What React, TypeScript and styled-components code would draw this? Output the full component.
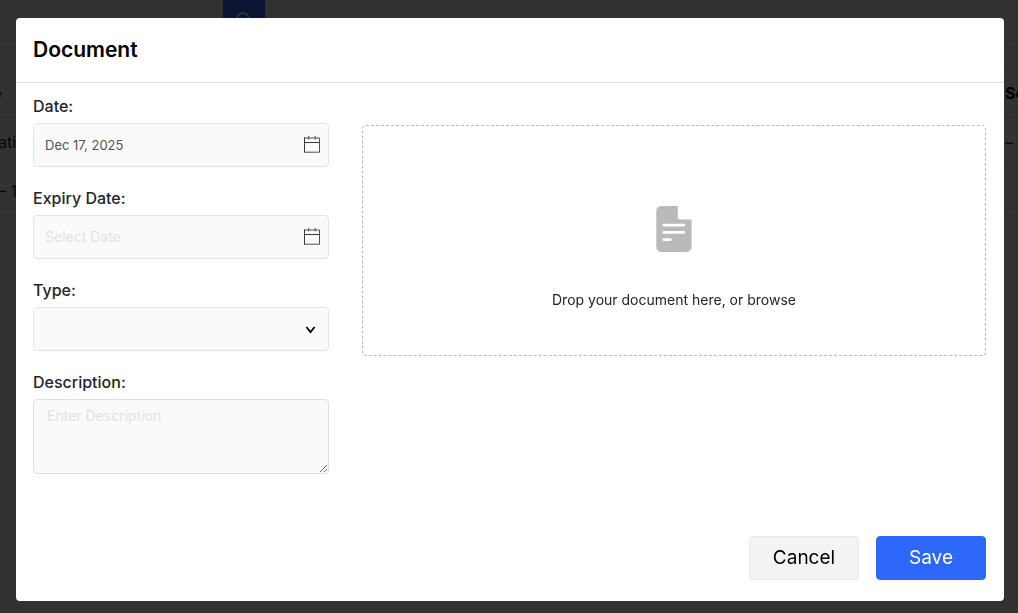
import React from "react";
import styled, { createGlobalStyle } from "styled-components";

const GlobalStyle = createGlobalStyle`
  *, *::before, *::after { box-sizing: border-box; }
  body {
    margin: 0;
    overflow: hidden;
    background: #fff;
    color: #212529;
    font-family: Inter, "Liberation Sans", sans-serif;
    font-size: 14px;
  }
  button, input, select, textarea { font-family: inherit; }
`;

const Page = styled.div`
  min-height: 100vh;
  background: #fafafa;
`;

const Toolbar = styled.div`
  display: flex;
  height: 41px;
  padding-left: 223px;
  border-bottom: 1px solid #e3e3e3;
`;

const SearchButton = styled.button`
  display: flex;
  align-items: center;
  justify-content: center;
  width: 42px;
  height: 32px;
  padding: 8px 2px 0 0;
  border: 0;
  background: #2e68fa;
  color: #fff;
`;

const RecordTable = styled.table`
  width: calc(100% + 8px);
  margin: 27px 0 0 -8px;
  border-collapse: collapse;
  font-size: 16px;
  table-layout: fixed;

  th, td {
    height: 49px;
    padding: 0 0 0 6px;
    border-top: 1px solid #e3e3e3;
    text-align: left;
    white-space: nowrap;
  }
  th { padding-left: 0; color: #000; }
  th:last-child, td:last-child { width: 13px; padding-left: 0; }
  tr:last-child td { border-bottom: 1px solid #e3e3e3; }
`;

const Backdrop = styled.div`
  position: fixed;
  inset: 0;
  overflow: auto;
  padding: 18px 14px 12px 16px;
  background: rgba(0, 0, 0, 0.8);
`;

const Modal = styled.form`
  display: flex;
  flex-direction: column;
  border-radius: 4px;
  background: #fff;
`;

const ModalHeader = styled.header`
  padding: 16px 17px;
  border-bottom: 1px solid #dee2e6;
`;

const Title = styled.h1`
  margin: 0;
  color: #000;
  font-size: 21px;
  font-weight: 600;
  line-height: 32px;
`;

const ModalBody = styled.div`
  display: grid;
  grid-template-columns: 296px minmax(0, 1fr);
  column-gap: 33px;
  align-items: start;
  padding: 10px 18px 62px 17px;
`;

const Fields = styled.div`
  display: flex;
  flex-direction: column;
  gap: 18px;
`;

const Field = styled.div`
  display: flex;
  flex-direction: column;
  gap: 4px;
`;

const Label = styled.label`
  color: #212529;
  font-size: 16px;
  font-weight: 500;
  line-height: 26px;
`;

const ControlBox = styled.div`
  display: flex;
  align-items: center;
  height: 44px;
  padding-right: 8px;
  border: 1px solid #e1e3e5;
  border-radius: 4px;
  background: #fafafa;
`;

const TextInput = styled.input`
  flex: 1;
  min-width: 0;
  height: 42px;
  padding: 0 0 0 11px;
  border: 0;
  outline: 0;
  background: transparent;
  color: #555;
  font-size: 13px;
  &::placeholder { color: #e2e2e2; font-size: 14px; opacity: 1; }
`;

const SelectWrap = styled.div`
  display: grid;
  align-items: center;
  > * { grid-area: 1 / 1; }
  > svg { justify-self: end; margin-right: 13px; pointer-events: none; }
`;

const Select = styled.select`
  width: 100%;
  height: 44px;
  padding: 0 32px 0 11px;
  appearance: none;
  border: 1px solid #e1e3e5;
  border-radius: 4px;
  background: #fafafa;
  color: #555;
  font-size: 13px;
`;

const TextArea = styled.textarea`
  display: block;
  width: 100%;
  height: 75px;
  padding: 6px 13px;
  border: 1px solid #dee0e3;
  border-radius: 4px;
  background: #fafafa;
  color: #555;
  font-size: 13px;
  line-height: 20px;
  resize: vertical;
  &::placeholder { color: #e2e2e2; font-size: 14px; opacity: 1; }
`;

const DropZone = styled.button`
  display: flex;
  flex-direction: column;
  align-items: center;
  gap: 38px;
  width: 100%;
  height: 231px;
  margin-top: 32px;
  padding: 80px 16px 0;
  border: 1px dashed #b9b9b9;
  border-radius: 4px;
  background: #fff;
  color: #212529;
  font-size: 14px;
  line-height: 20px;
`;

const ModalFooter = styled.footer`
  display: flex;
  justify-content: flex-end;
  gap: 17px;
  padding: 0 18px 21px;
`;

const ActionButton = styled.button<{ $primary?: boolean }>`
  width: 110px;
  height: 44px;
  padding: 0 0 2px;
  border: 1px solid ${(p) => (p.$primary ? "#2e68fa" : "#e8e8e8")};
  border-radius: 4px;
  background: ${(p) => (p.$primary ? "#2e68fa" : "#f3f3f3")};
  color: ${(p) => (p.$primary ? "#fff" : "#000")};
  font-size: 19px;
`;

const CalendarIcon = () => (
  <svg width="16" height="18" viewBox="0 0 16 18" fill="none" aria-hidden="true">
    <path d="M.5 1.5v15M0 6.5h16" stroke="#343a40" />
    <path d="M0 2h15.5v14.2H0M4.7 0v3.5M11.2 0v3.5" stroke="#4b5056" />
  </svg>
);

const ChevronIcon = () => (
  <svg width="11" height="10" viewBox="0 0 11 10" fill="none" stroke="#000" strokeWidth="1.8" aria-hidden="true">
    <path d="M1.4 3 5.5 8 9.6 3" />
  </svg>
);

const FileIcon = () => (
  <svg width="36" height="46" viewBox="0 0 36 46" aria-hidden="true">
    <path d="M5 0h16.8v11.4a2 2 0 0 0 2 2h11.8V41a5 5 0 0 1-5 5H5.300a5 5 0 0 1-5-5V5A5 5 0 0 1 5 0Z" fill="#bababa" />
    <path d="M7.800 19.2h20M7.800 26.400h20M7.800 33.6h6.600" stroke="#fff" strokeWidth="2.800" strokeLinecap="round" />
  </svg>
);

const SearchIcon = () => (
  <svg width="16" height="16" viewBox="0 0 16 16" fill="none" stroke="currentColor" strokeWidth="2" aria-hidden="true">
    <circle cx="8" cy="7" r="6" />
  </svg>
);

export default function App() {
  return (
    <>
      <GlobalStyle />
      <Page>
        <Toolbar>
          <SearchButton type="button" aria-label="Search"><SearchIcon /></SearchButton>
        </Toolbar>
        <RecordTable>
          <thead><tr><th>e</th><th>Se</th></tr></thead>
          <tbody>
            <tr><td>ati</td><td>–</td></tr>
            <tr><td>– 1</td><td /></tr>
          </tbody>
        </RecordTable>
      </Page>
      <Backdrop>
        <Modal role="dialog" aria-labelledby="dialog-title" onSubmit={(e) => e.preventDefault()}>
          <ModalHeader><Title id="dialog-title">Document</Title></ModalHeader>
          <ModalBody>
            <Fields>
              <Field>
                <Label htmlFor="date">Date:</Label>
                <ControlBox>
                  <TextInput id="date" defaultValue="Dec 17, 2025" />
                  <CalendarIcon />
                </ControlBox>
              </Field>
              <Field>
                <Label htmlFor="expiry">Expiry Date:</Label>
                <ControlBox>
                  <TextInput id="expiry" placeholder="Select Date" />
                  <CalendarIcon />
                </ControlBox>
              </Field>
              <Field>
                <Label htmlFor="type">Type:</Label>
                <SelectWrap>
                  <Select id="type" defaultValue=""><option value="" /></Select>
                  <ChevronIcon />
                </SelectWrap>
              </Field>
              <Field>
                <Label htmlFor="description">Description:</Label>
                <TextArea id="description" placeholder="Enter Description" />
              </Field>
            </Fields>
            <DropZone type="button">
              <FileIcon />
              <span>Drop your document here, or browse</span>
            </DropZone>
          </ModalBody>
          <ModalFooter>
            <ActionButton type="button">Cancel</ActionButton>
            <ActionButton type="submit" $primary>Save</ActionButton>
          </ModalFooter>
        </Modal>
      </Backdrop>
    </>
  );
}
